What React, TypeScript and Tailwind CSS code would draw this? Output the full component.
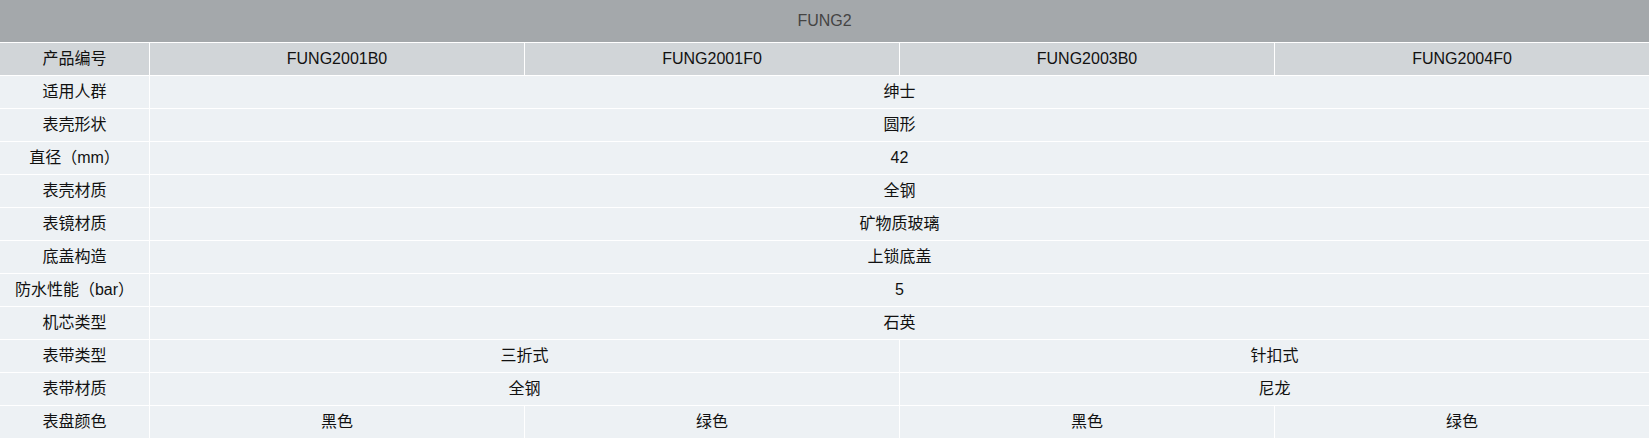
import React from 'react';

type Cell = { text: string; span: 1 | 2 | 4 };
type Row = { label: string; cells: Cell[]; head?: boolean };

const spanClass: Record<number, string> = {
  1: 'col-span-1',
  2: 'col-span-2',
  4: 'col-span-4',
};

const all = (text: string): Cell[] => [{ text, span: 4 }];

const rows: Row[] = [
  {
    label: '产品编号',
    head: true,
    cells: [
      { text: 'FUNG2001B0', span: 1 },
      { text: 'FUNG2001F0', span: 1 },
      { text: 'FUNG2003B0', span: 1 },
      { text: 'FUNG2004F0', span: 1 },
    ],
  },
  { label: '适用人群', cells: all('绅士') },
  { label: '表壳形状', cells: all('圆形') },
  { label: '直径（mm）', cells: all('42') },
  { label: '表壳材质', cells: all('全钢') },
  { label: '表镜材质', cells: all('矿物质玻璃') },
  { label: '底盖构造', cells: all('上锁底盖') },
  { label: '防水性能（bar）', cells: all('5') },
  { label: '机芯类型', cells: all('石英') },
  {
    label: '表带类型',
    cells: [
      { text: '三折式', span: 2 },
      { text: '针扣式', span: 2 },
    ],
  },
  {
    label: '表带材质',
    cells: [
      { text: '全钢', span: 2 },
      { text: '尼龙', span: 2 },
    ],
  },
  {
    label: '表盘颜色',
    cells: [
      { text: '黑色', span: 1 },
      { text: '绿色', span: 1 },
      { text: '黑色', span: 1 },
      { text: '绿色', span: 1 },
    ],
  },
];

export default function App() {
  return (
    <div
      className="w-[1649px] bg-white text-[16px] leading-none text-[#111]"
      style={{ fontFamily: '"Liberation Sans", "Noto Sans CJK SC", sans-serif' }}
    >
      <div className="grid grid-cols-[149px_repeat(4,1fr)] grid-rows-[42px] auto-rows-[32px] gap-px">
        <div className="col-span-5 flex items-center justify-center bg-[#a4a8ab] text-[#444]">
          FUNG2
        </div>
        {rows.map((row) => {
          const bg = row.head ? 'bg-[#d1d5d8]' : 'bg-[#edf1f4]';
          return (
            <React.Fragment key={row.label}>
              <div className={`flex items-center justify-center ${bg}`}>{row.label}</div>
              {row.cells.map((c, i) => (
                <div
                  key={i}
                  className={`flex items-center justify-center ${spanClass[c.span]} ${bg}`}
                >
                  {c.text}
                </div>
              ))}
            </React.Fragment>
          );
        })}
      </div>
    </div>
  );
}
